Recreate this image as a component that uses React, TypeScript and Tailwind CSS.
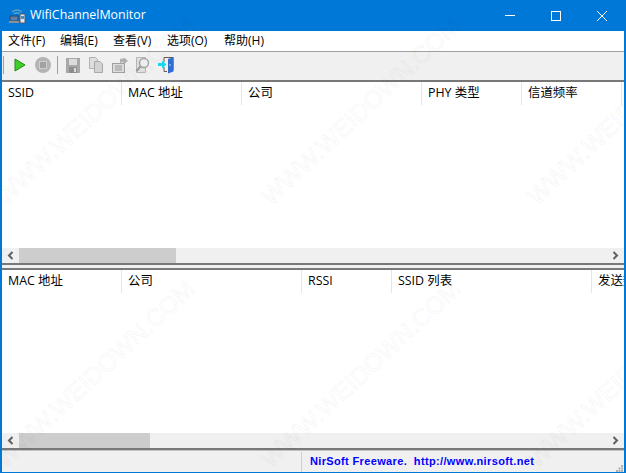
import React from 'react';

const topColumns = [
  { label: 'SSID', width: 'w-[120px]' },
  { label: 'MAC 地址', width: 'w-[120px]' },
  { label: '公司', width: 'w-[180px]' },
  { label: 'PHY 类型', width: 'w-[100px]' },
  { label: '信道频率', width: 'w-[100px]' },
];

const bottomColumns = [
  { label: 'MAC 地址', width: 'w-[120px]' },
  { label: '公司', width: 'w-[180px]' },
  { label: 'RSSI', width: 'w-[90px]' },
  { label: 'SSID 列表', width: 'w-[200px]' },
  { label: '发送数据', width: 'w-[100px]' },
];

const menus = [
  { label: '文件(F)', width: 'w-[52px]' },
  { label: '编辑(E)', width: 'w-[53px]' },
  { label: '查看(V)', width: 'w-[54px]' },
  { label: '选项(O)', width: 'w-[57px]' },
  { label: '帮助(H)', width: 'w-[60px]' },
];

// the site's watermark, tiled over the whole window
const marks = [
  'left-[6px] top-[185px]',
  'left-[272px] top-[185px]',
  'left-[538px] top-[185px]',
  'left-[6px] top-[448px]',
  'left-[272px] top-[448px]',
  'left-[538px] top-[448px]',
];

function AppIcon() {
  return (
    <svg width="17" height="17" viewBox="0 0 17 17" fill="none">
      <path d="M3 5q5-4 10 0M5 7q3-2.500 6 0" stroke="#5aa0c8" strokeWidth="1.300" />
      <rect x="1" y="9" width="8" height="5" fill="#5b7fa8" stroke="#33465c" />
      <rect x="0" y="14" width="10" height="2" fill="#8a929c" />
      <rect x="11" y="7" width="5" height="9" fill="#dfe6ee" stroke="#4a5a70" />
      <rect x="12" y="9" width="3" height="3" fill="#3f8fd0" />
    </svg>
  );
}

function ToolIcons() {
  return (
    <>
      <svg className="ml-[1px]" width="12" height="14" viewBox="0 0 12 14">
        <path d="M1 1 L11 7 L1 13 Z" fill="#3fd02a" stroke="#1f8a18" />
      </svg>
      <svg className="ml-[9px]" width="16" height="16" viewBox="0 0 16 16">
        <circle cx="8" cy="8" r="8" fill="#b4b4b4" />
        <rect x="4.500" y="4.500" width="7" height="7" fill="#a2a2a2" stroke="#cfcfcf" />
      </svg>
      <div className="ml-[6px] h-[18px] w-[1px] bg-[#a0a0a0]" />
      <svg className="ml-[8px]" width="14" height="15" viewBox="0 0 14 15">
        <rect x="0" y="0" width="14" height="15" fill="#a8a8a8" />
        <rect x="3" y="1" width="8" height="6" fill="#dcdcdc" />
        <rect x="3" y="9" width="8" height="6" fill="#8e8e8e" />
        <rect x="8" y="10" width="2" height="4" fill="#dcdcdc" />
      </svg>
      <svg className="ml-[9px]" width="14" height="16" viewBox="0 0 14 16">
        <path d="M0.500 0.500H6.500L8.500 2.500V11.500H0.500Z" fill="#dedede" stroke="#b0b0b0" />
        <path d="M5.500 4.500H11L13.500 7V15.500H5.500Z" fill="#d2d2d2" stroke="#a8a8a8" />
      </svg>
      <svg className="ml-[9px]" width="16" height="15" viewBox="0 0 16 15">
        <path d="M8 1 L13 0 L16 3 L12 6 L11 4 L8 5 Z" fill="#b0b0b0" />
        <rect x="0.500" y="5.500" width="12" height="9" fill="#dcdcdc" stroke="#a0a0a0" />
        <path d="M3 8h7M3 10h7M3 12h7" stroke="#9a9a9a" />
      </svg>
      <svg className="ml-[7px]" width="15" height="16" viewBox="0 0 15 16">
        <path d="M1.500 0.500H10.500V15.500H1.500Z" fill="#e2e2e2" stroke="#b8b8b8" />
        <circle cx="9" cy="6" r="4.500" fill="#eeeeee" stroke="#a4a4a4" strokeWidth="1.400" />
        <path d="M5.500 9.500 L1.500 14" stroke="#999999" strokeWidth="2" />
      </svg>
      <svg className="ml-[8px]" width="17" height="18" viewBox="0 0 17 18">
        <path d="M6 1.500H15V14" fill="none" stroke="#6b5a4c" />
        <path d="M6 1.500V6M6 11V15.500H9" fill="none" stroke="#6b5a4c" />
        <path d="M10 3 L15.500 1 V15.500 L10 17.500Z" fill="#2f6fd0" />
        <rect x="11.500" y="8" width="1" height="2" fill="#bcd6f5" />
        <path d="M0 7H4V4.500L8.500 8.500L4 12.500V10H0Z" fill="#18d8ee" />
      </svg>
    </>
  );
}

function Header({ columns }: { columns: { label: string; width: string }[] }) {
  return (
    <div className="flex h-[23px] shrink-0 overflow-hidden">
      {columns.map((c) => (
        <div key={c.label} className={`${c.width} shrink-0 border-r border-[#e5e5e5] pl-[6px] pt-[2px] text-[12.4px] leading-[18px] whitespace-nowrap text-black`}>
          {c.label}
        </div>
      ))}
    </div>
  );
}

function ScrollBar({ thumb }: { thumb: string }) {
  return (
    <div className="flex h-[15px] shrink-0 items-center bg-[#f0f0f0]">
      <div className="flex h-full w-[17px] shrink-0 items-center justify-center">
        <svg width="7" height="9" viewBox="0 0 7 9" fill="none">
          <path d="M5.500 1 L2 4.500 L5.500 8" stroke="#606060" strokeWidth="2" />
        </svg>
      </div>
      <div className={`h-full ${thumb} bg-[#cdcdcd]`} />
      <div className="ml-auto flex h-full w-[17px] shrink-0 items-center justify-center">
        <svg width="7" height="9" viewBox="0 0 7 9" fill="none">
          <path d="M1.500 1 L5 4.500 L1.500 8" stroke="#606060" strokeWidth="2" />
        </svg>
      </div>
    </div>
  );
}

export default function App() {
  return (
    <div
      className="relative flex h-[473px] w-[626px] flex-col overflow-hidden border-x-2 border-b border-[#0078d7] bg-[#f0f0f0]"
      style={{ fontFamily: '"Open Sans", "Noto Sans CJK SC", sans-serif' }}
    >
      {/* title bar */}
      <div className="-mx-[2px] flex h-[31px] shrink-0 items-center bg-[#0078d7] text-white">
        <div className="ml-[9px]"><AppIcon /></div>
        <span className="ml-[4px] text-[12.4px]">WifiChannelMonitor</span>
        <div className="ml-auto mr-[1px] flex h-full">
          <div className="flex w-[46px] items-center justify-center">
            <div className="h-[1px] w-[10px] bg-white" />
          </div>
          <div className="flex w-[46px] items-center justify-center">
            <div className="h-[10px] w-[10px] border border-white" />
          </div>
          <div className="flex w-[46px] items-center justify-center">
            <svg width="10" height="10" viewBox="0 0 10 10">
              <path d="M0 0 L10 10 M10 0 L0 10" stroke="white" strokeWidth="1" />
            </svg>
          </div>
        </div>
      </div>

      {/* menu */}
      <div className="flex h-[20px] shrink-0 items-center bg-white pl-[6px] text-[12px] text-black">
        {menus.map((m) => (
          <span key={m.label} className={m.width}>{m.label}</span>
        ))}
      </div>
      <div className="h-[1px] shrink-0 bg-[#a0a0a0]" />

      {/* toolbar */}
      <div className="flex h-[28px] shrink-0 items-center pb-[2px] pl-[1px]">
        <div className="mr-[9px] h-[18px] w-[1px] bg-[#a0a0a0]" />
        <ToolIcons />
      </div>

      {/* top list */}
      <div className="flex h-[183px] shrink-0 flex-col border-t-2 border-[#787878] bg-white">
        <Header columns={topColumns} />
        <div className="flex-1" />
        <ScrollBar thumb="w-[157px]" />
      </div>

      {/* splitter */}
      <div className="h-[5px] shrink-0 border-t-2 border-[#787878] bg-[#f0f0f0]" />

      {/* bottom list */}
      <div className="flex h-[180px] shrink-0 flex-col border-t-2 border-[#787878] bg-white">
        <Header columns={bottomColumns} />
        <div className="flex-1" />
        <ScrollBar thumb="w-[131px]" />
      </div>

      {/* status bar */}
      <div className="flex flex-1 flex-col border-t-2 border-[#787878]">
        <div className="h-[1px] shrink-0 bg-[#c4c4c4]" />
        <div className="flex flex-1 items-center justify-end">
          <div className="flex h-[20px] w-[323px] items-center border-l border-[#d0d0d0] pl-[8px]">
            <span className="text-[11px] font-bold tracking-[0.35px] whitespace-pre text-[#0000ff]" style={{ fontFamily: '"Liberation Sans", sans-serif' }}>
              NirSoft Freeware.  http://www.nirsoft.net
            </span>
            <svg className="ml-auto mr-[1px] self-end" width="7" height="7" viewBox="0 0 7 7" fill="#b0b0b0">
              <rect x="5" y="0" width="2" height="2" />
              <rect x="2.500" y="2.500" width="2" height="2" />
              <rect x="5" y="2.500" width="2" height="2" />
              <rect x="0" y="5" width="2" height="2" />
              <rect x="2.500" y="5" width="2" height="2" />
              <rect x="5" y="5" width="2" height="2" />
            </svg>
          </div>
        </div>
      </div>

      {/* watermark */}
      {marks.map((m) => (
        <span
          key={m}
          className={`pointer-events-none absolute ${m} origin-bottom-left -rotate-[43deg] text-[24.4px] leading-none whitespace-nowrap text-transparent [-webkit-text-stroke:1px_rgba(0,0,0,0.05)]`}
          style={{ fontFamily: '"Liberation Sans", sans-serif' }}
        >
          WWW.WEIDOWN.COM
        </span>
      ))}
    </div>
  );
}
